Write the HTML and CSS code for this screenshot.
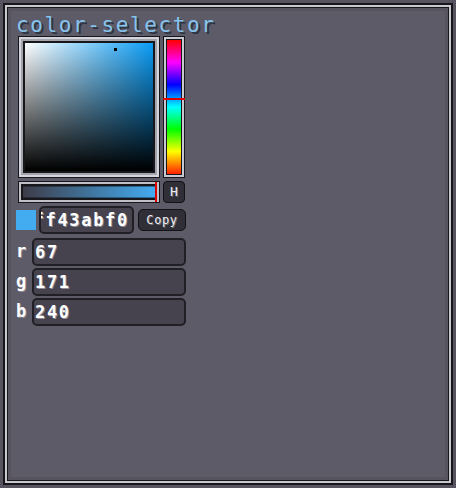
FILE: index.html
```html
<!DOCTYPE html>
<html>
<head>
<meta charset="utf-8">
<link rel="stylesheet" href="styles.css">
</head>
<body>
<div class="window">
  <div class="title">color-selector</div>
  <div class="picker">
    <div class="sv frame"><div class="sv-in"><span class="dot"></span></div></div>
    <div class="hue frame"><div class="hue-in"></div><span class="hue-mark"></span></div>
    <div class="alpha frame"><div class="alpha-in"></div><span class="alpha-mark"></span></div>
    <div class="hbtn">H</div>
  </div>
  <div class="hexrow">
    <span class="swatch"></span>
    <div class="field hex"><span>ff43abf0</span></div>
    <div class="copy">Copy</div>
  </div>
  <div class="chan"><span class="lbl">r</span><div class="field">67</div></div>
  <div class="chan"><span class="lbl">g</span><div class="field">171</div></div>
  <div class="chan"><span class="lbl">b</span><div class="field">240</div></div>
</div>
</body>
</html>
```
FILE: styles.css
```css
html, body {
  margin: 0;
  padding: 0;
}
body {
  width: 456px;
  height: 488px;
  background: #57535f;
  font-family: "DejaVu Sans Mono", monospace;
  overflow: hidden;
}
.window {
  box-sizing: border-box;
  margin: 3px;
  width: 450px;
  height: 482px;
  border: 2px solid #17161b;
  box-shadow: inset 0 0 0 2px #c8c8d0, inset 0 0 0 3px #17161b, inset 0 0 0 6px #57545f;
  background: #5e5b68;
  padding: 10px 0 0 11px;
}
.title {
  height: 21px;
  line-height: 21px;
  font-size: 21px;
  letter-spacing: 1.6px;
  color: #86c4ee;
  text-shadow: 2px 2px 0 #2c3442;
}
.picker {
  margin-left: 2px;
  display: grid;
  grid-template-columns: 142px 22px;
  grid-template-rows: 142px 22px;
  column-gap: 3px;
  row-gap: 3px;
  width: 167px;
}
.frame {
  position: relative;
  box-sizing: border-box;
  border: 1px solid #17161b;
}
.sv {
  background: #a4a4ac;
  box-shadow: inset 0 0 0 2px #d4d4dc;
  padding: 4px;
}
.sv-in {
  position: relative;
  height: 100%;
  box-sizing: border-box;
  border: 2px solid #17161b;
  background: linear-gradient(to top, #000 0%, rgba(0,0,0,0) 100%),
              linear-gradient(to right, #fff 0%, #0a9cf5 100%);
}
.dot {
  position: absolute;
  left: 89px;
  top: 5px;
  width: 3px;
  height: 3px;
  background: #000;
}
.hue {
  background: #17161b;
  box-shadow: inset 0 0 0 2px #c8c8d0;
  padding: 3px;
}
.hue-in {
  height: 100%;
  background: linear-gradient(to bottom, #ff0000 0%, #ff00ff 16.6%, #0000ff 33.3%, #00ffff 50%, #00ff00 66.6%, #ffff00 83.3%, #ff2000 100%);
}
.hue-mark {
  position: absolute;
  left: -1px;
  right: -1px;
  top: 61px;
  height: 2px;
  background: #e00000;
}
.alpha {
  background: #17161b;
  box-shadow: inset 0 0 0 2px #c0c0c8;
  padding: 4px;
}
.alpha-in {
  height: 100%;
  background: linear-gradient(to right, rgba(67,171,240,0) 0%, rgba(67,171,240,1) 100%), #3e3c48;
  box-shadow: inset 0 1px 0 rgba(0,0,0,0.35), inset 0 -1px 0 rgba(0,0,0,0.35);
}
.alpha-mark {
  position: absolute;
  right: 2px;
  top: 0;
  bottom: 0;
  width: 2px;
  background: #e00000;
}
.hbtn {
  box-sizing: border-box;
  border: 1px solid #131217;
  border-radius: 4px;
  background: #302e36;
  color: #ececf2;
  font-size: 13px;
  line-height: 20px;
  text-align: center;
  text-shadow: 1px 1px 0 #6c6a74;
}
.hexrow {
  margin-top: 3px;
  height: 28px;
  display: flex;
  align-items: center;
}
.swatch {
  width: 20px;
  height: 20px;
  background: #43abf0;
}
.field {
  box-sizing: border-box;
  height: 28px;
  border: 2px solid #211f26;
  border-radius: 5px;
  background: #46434f;
  color: #ffffff;
  font-size: 17px;
  font-weight: bold;
  letter-spacing: 1.7px;
  line-height: 24px;
  padding-left: 1px;
  text-shadow: 1px 1px 0 #8e8c98;
  overflow: hidden;
  white-space: nowrap;
}
.hex {
  margin-left: 3px;
  width: 95px;
  display: flex;
  justify-content: flex-end;
  padding-right: 3px;
}
.copy {
  margin-left: 4px;
  box-sizing: border-box;
  width: 48px;
  height: 22px;
  border: 1px solid #131217;
  border-radius: 5px;
  background: #302e36;
  color: #f0f0f4;
  font-size: 12px;
  letter-spacing: 0.6px;
  line-height: 20px;
  text-align: center;
  text-shadow: 1px 1px 0 #6c6a74;
}
.chan {
  display: flex;
  margin-top: 2px;
  height: 28px;
}
.hexrow + .chan {
  margin-top: 4px;
}
.lbl {
  width: 16px;
  color: #ffffff;
  font-size: 17px;
  font-weight: bold;
  line-height: 26px;
  text-shadow: 1px 1px 0 #8e8c98;
}
.chan .field {
  width: 154px;
}
```
